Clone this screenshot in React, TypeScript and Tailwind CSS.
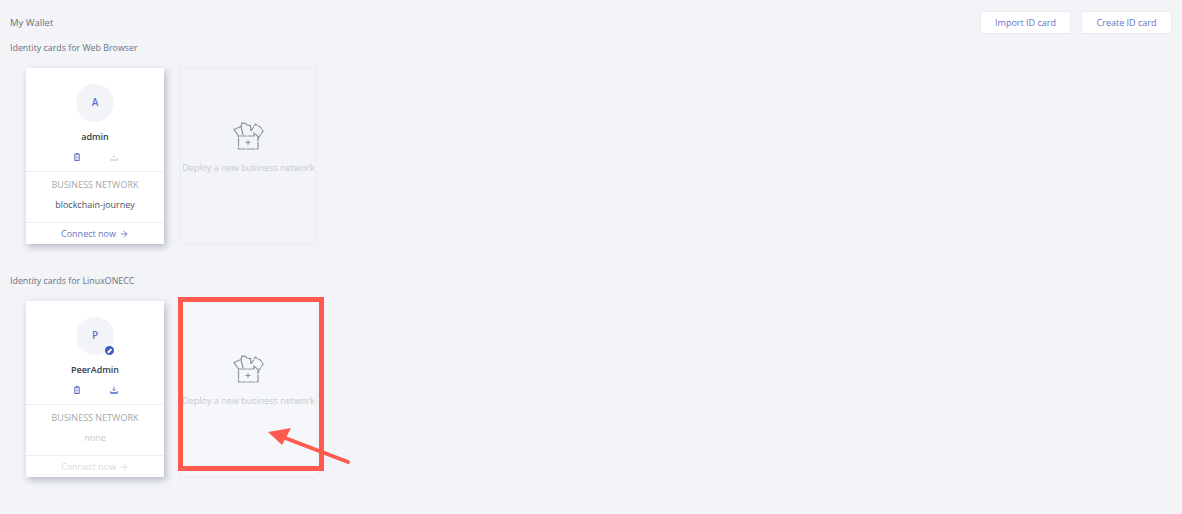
import { ArrowRight } from "lucide-react";

type IdCard = {
  initial: string;
  name: string;
  network: string;
  connected: boolean;
  badge?: boolean;
};

function DeployIcon() {
  return (
    <svg width="31" height="28" viewBox="0 0 31 28" fill="none" stroke="#8d9599" strokeWidth="1.2">
      <path d="M5.5 14 L1 7.5 L8 4.5 L10 13" />
      <path d="M8 4.5 L9 1 L13 1.6 L14 3 L17.5 3.6 L18 9" />
      <path d="M18 9 L22.5 2 L26 4.5 L27 4.5 L30 9 L26 15 L25 18" strokeDasharray="5 0.8" />
      <path d="M5.5 14 L21 14 L21 11 L25 14.5 L25 27 L5.5 27 Z" strokeDasharray="9 0.7" />
      <path d="M12.5 20.5 H17.5 M15 18 V23" strokeWidth="1.1" />
    </svg>
  );
}

function TrashIcon() {
  return (
    <svg width="6" height="8" viewBox="0 0 6 8" fill="none" stroke="#5a6dc6" strokeWidth="1">
      <path d="M0.2 1.2 H5.8 M2 0.5 H4" />
      <path d="M0.8 1.5 V7.5 H5.2 V1.5" />
      <path d="M1.5 3 H4.5 M1.5 4.5 H4.5 M1.5 6 H4.5" strokeWidth="0.8" opacity="0.6" />
    </svg>
  );
}

function TrayIcon({ color }: { color: string }) {
  return (
    <svg width="8" height="8" viewBox="0 0 8 8" fill="none" stroke={color} strokeWidth="0.9">
      <path d="M4 0.5 V4.5 M2.4 3.2 L4 4.8 L5.6 3.2" />
      <path d="M0.5 5 V7.5 H7.5 V5" />
      <path d="M0.5 6.5 H7.5" />
    </svg>
  );
}

function WalletCard({ card }: { card: IdCard }) {
  return (
    <div className="w-[138px] h-[176px] bg-white shadow-[2px_3px_7px_rgba(40,50,70,0.3)] flex flex-col">
      <div className="h-[104px] flex flex-col items-center pt-[16px] border-b border-[#edeff2]">
        <div className="relative w-[38px] h-[38px] rounded-full bg-[#f2f4f8] flex items-center justify-center pb-[2px] text-[10px] font-semibold text-[#6374c8]">
          {card.initial}
          {card.badge && (
            <span className="absolute right-0 bottom-0 w-[9px] h-[9px] rounded-full bg-[#4059c0] flex items-center justify-center">
              <span className="block w-[5px] h-[1.5px] bg-white -rotate-45" />
            </span>
          )}
        </div>
        <div className="mt-[8px] text-[9px] leading-[14px] font-semibold text-[#353d4c]">{card.name}</div>
        <div className="mt-[9px] ml-[1px] w-[44px] flex justify-between items-center">
          <TrashIcon />
          <TrayIcon color={card.connected ? "#dcdee2" : "#6b7dcc"} />
        </div>
      </div>
      <div className="flex-1 flex flex-col items-center border-b border-[#edeff2]">
        <div className="mt-[6px] text-[9px] leading-[13px] text-[#a4a9ae]">BUSINESS NETWORK</div>
        <div className={`mt-[7px] text-[9px] leading-[13px] ${card.connected ? "text-[#4a5160]" : "text-[#c6c9cd]"}`}>
          {card.network}
        </div>
      </div>
      <div className={`h-[21px] flex items-center justify-center gap-[3px] text-[9px] ${card.connected ? "text-[#6374c8]" : "text-[#d8dadd]"}`}>
        Connect now
        <ArrowRight size={10} />
      </div>
    </div>
  );
}

function DeployTile({ highlighted }: { highlighted: boolean }) {
  return (
    <div
      className={`w-[137px] h-[176px] border border-dotted border-[#e0e3e8] flex flex-col items-center pt-[53px] ${highlighted ? "bg-[#f6f7fa]" : ""}`}
    >
      <DeployIcon />
      <div className="mt-[11px] text-[9px] leading-[13px] whitespace-nowrap text-[#c6cacd]">
        Deploy a new business network
      </div>
    </div>
  );
}

function Section({
  title,
  card,
  className,
  highlighted,
}: {
  title: string;
  card: IdCard;
  className: string;
  highlighted: boolean;
}) {
  return (
    <section className={className}>
      <h2 className="px-[10px] text-[8.85px] leading-[13px] font-normal text-[#6a7280]">{title}</h2>
      <div className="mt-[13px] pl-[26px] flex gap-[16px]">
        <WalletCard card={card} />
        <DeployTile highlighted={highlighted} />
      </div>
    </section>
  );
}

export default function App() {
  return (
    <div className="relative w-[1182px] h-[514px] overflow-hidden bg-[#f2f4f8] font-['Open_Sans',sans-serif]">
      <header className="flex justify-between pt-[11px] pl-[10px] pr-[10px]">
        <h1 className="pt-[5px] text-[9.5px] leading-[14px] font-normal text-[#6a7280]">My Wallet</h1>
        <div className="flex gap-[10px]">
          <button className="w-[91px] h-[23px] bg-white border border-[#e9ebf0] rounded-[2px] text-[9px] text-[#6374c8]">
            Import ID card
          </button>
          <button className="w-[91px] h-[23px] bg-white border border-[#e9ebf0] rounded-[2px] text-[9px] text-[#6374c8]">
            Create ID card
          </button>
        </div>
      </header>
      <Section
        className="mt-[8px]"
        title="Identity cards for Web Browser"
        highlighted={false}
        card={{ initial: "A", name: "admin", network: "blockchain-journey", connected: true }}
      />
      <Section
        className="mt-[31px]"
        title="Identity cards for LinuxONECC"
        highlighted
        card={{ initial: "P", name: "PeerAdmin", network: "none", connected: false, badge: true }}
      />
      {/* annotation drawn over the screenshot */}
      <div className="absolute left-[178px] top-[297px] w-[146px] h-[174px] border-[5px] border-[#ff5a4d]" />
      <svg className="absolute left-[262px] top-[425px]" width="92" height="42" viewBox="0 0 92 42" fill="none">
        <path d="M18 11 L86 37" stroke="#ff5a4d" strokeWidth="4" strokeLinecap="round" />
        <path d="M6 7 L29 3 L20 20 Z" fill="#ff5a4d" />
      </svg>
    </div>
  );
}
